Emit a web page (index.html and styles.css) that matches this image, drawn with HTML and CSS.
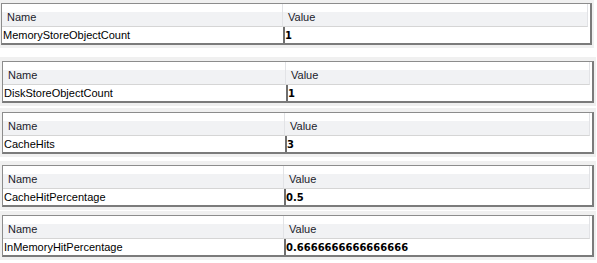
FILE: index.html
```html
<!DOCTYPE html>
<html>
<head>
<meta charset="utf-8">
<link rel="stylesheet" href="styles.css">
</head>
<body>
<div class="page">
  <section class="panel panel-first">
    <div class="grid grid-a">
      <div class="hdr hdr-name">Name</div>
      <div class="hdr hdr-value">Value</div>
      <div class="cell cell-name">MemoryStoreObjectCount</div>
      <div class="cell cell-value">1</div>
    </div>
  </section>
  <section class="panel panel-second">
    <div class="grid grid-b">
      <div class="hdr hdr-name">Name</div>
      <div class="hdr hdr-value">Value</div>
      <div class="cell cell-name">DiskStoreObjectCount</div>
      <div class="cell cell-value">1</div>
    </div>
  </section>
  <section class="panel panel-third">
    <div class="grid grid-c">
      <div class="hdr hdr-name">Name</div>
      <div class="hdr hdr-value">Value</div>
      <div class="cell cell-name">CacheHits</div>
      <div class="cell cell-value">3</div>
    </div>
  </section>
  <section class="panel panel-fourth">
    <div class="grid grid-d">
      <div class="hdr hdr-name">Name</div>
      <div class="hdr hdr-value">Value</div>
      <div class="cell cell-name">CacheHitPercentage</div>
      <div class="cell cell-value">0.5</div>
    </div>
  </section>
  <section class="panel panel-fifth">
    <div class="grid grid-d">
      <div class="hdr hdr-name">Name</div>
      <div class="hdr hdr-value">Value</div>
      <div class="cell cell-name">InMemoryHitPercentage</div>
      <div class="cell cell-value">0.6666666666666666</div>
    </div>
  </section>
</div>
</body>
</html>
```
FILE: styles.css
```css
html, body {
  margin: 0;
  padding: 0;
  background: #ffffff;
}

body {
  font-family: "Liberation Sans", Arial, sans-serif;
  font-size: 11px;
  color: #000000;
}

.page {
  width: 597px;
  display: flex;
  flex-direction: column;
}

.panel {
  background: #f0f0f0;
  margin-right: 1px;
  padding: 4px 2px 3px 2px;
}

.panel-first {
  margin-right: 3px;
  padding: 3px 2px 3px 1px;
}

.panel-second {
  margin-top: 9px;
}

.panel-third {
  margin-top: 2px;
}

.panel-fourth {
  margin-top: 4px;
}

.panel-fifth {
  margin-top: 1px;
}

.grid {
  display: grid;
  grid-template-columns: var(--name-col, 281px) 1fr;
  grid-template-rows: 23px 16px;
  background: #ffffff;
  border-top: 1px solid #8c8c8c;
  border-left: 1px solid #8c8c8c;
  border-right: 2px solid #7b7b7b;
  border-bottom: 2px solid #7b7b7b;
}

.grid-a { --name-col: 281px; }
.grid-b { --name-col: 283px; }
.grid-c { --name-col: 282px; }
.grid-d { --name-col: 281px; }

.hdr {
  box-sizing: border-box;
  background: linear-gradient(#ffffff 0, #ffffff 38%, #f1f2f4 38%, #f1f2f4 100%);
  border-bottom: 1px solid #d5d5d5;
  padding: 6px 0 0 5px;
  line-height: 14px;
  color: #1b1b2b;
  white-space: nowrap;
}

.hdr-name {
  border-right: 1px solid #e2e3e6;
}

.hdr-value {
  padding-left: 5px;
  margin-right: 2px;
  border-right: 1px solid #e2e3e6;
}

.cell {
  line-height: 17px;
  white-space: nowrap;
  overflow: hidden;
}

.cell-name {
  padding-left: 1px;
}

.cell-value {
  border-left: 2px solid #6e6e6e;
  font-family: "DejaVu Sans", Verdana, sans-serif;
  font-weight: bold;
  font-size: 10px;
  padding-left: 0;
}
```
